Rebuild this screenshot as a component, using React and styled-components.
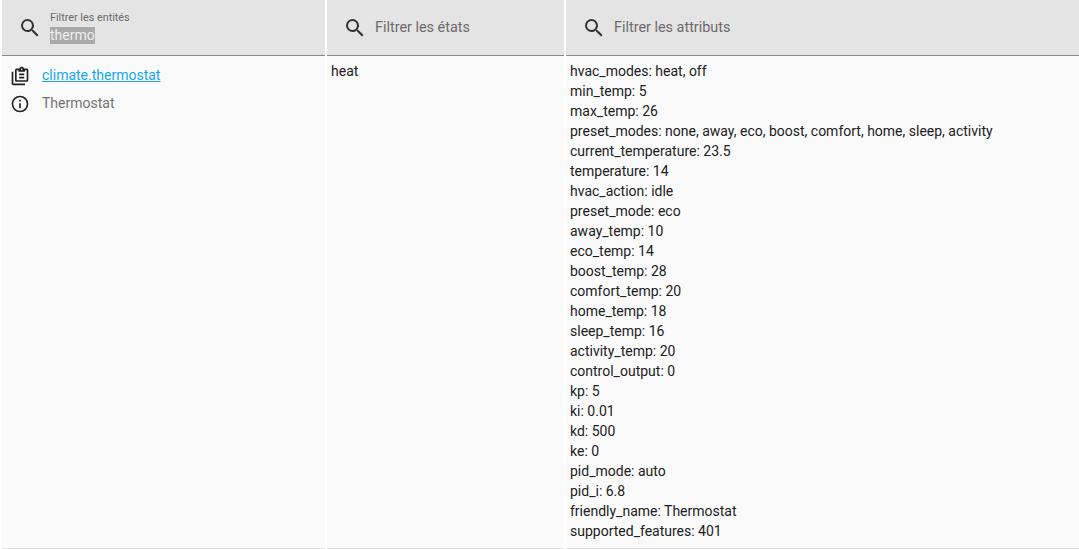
import React from "react";
import styled, { createGlobalStyle } from "styled-components";

const GlobalStyle = createGlobalStyle`
  html, body {
    margin: 0;
    padding: 0;
    background: #fff;
    overflow: hidden;
  }
  body {
    font-family: Roboto, "Liberation Sans", sans-serif;
    font-size: 14px;
    color: #212121;
  }
`;

const Table = styled.div`
  width: 1079px;
  height: 549px;
  display: grid;
  grid-template-columns: 325px 239px 515px;
  grid-template-rows: 56px 1fr;
`;

const FilterCell = styled.div`
  display: flex;
  align-items: center;
  background: #e4e4e4;
  border-bottom: 1px solid #8a8a8a;
  margin-left: 2px;
  padding-left: 16px;
  box-sizing: border-box;
  height: 56px;
`;

const SearchIcon = styled.svg`
  width: 24px;
  height: 24px;
  fill: #333;
  flex: none;
`;

const FilterLabel = styled.span`
  margin-left: 8px;
  margin-top: -1px;
  font-size: 14.4px;
  color: #6b6b6b;
`;

const FloatField = styled.div`
  margin-left: 8px;
  display: flex;
  flex-direction: column;
  align-items: flex-start;
`;

const SmallLabel = styled.span`
  font-size: 10.8px;
  line-height: 12px;
  color: #6b6b6b;
`;

const Selected = styled.span`
  font-size: 14px;
  line-height: 17px;
  margin-top: 3px;
  background: #a9a9a9;
  color: #f0f0f0;
`;

const BodyCell = styled.div`
  background: #fafafa;
  border-bottom: 1px solid #e0e0e0;
  margin-left: 2px;
  height: 493px;
  box-sizing: border-box;
  padding: 5px 0 0 ${(props) => props.$pad}px;
  line-height: 20px;
`;

const EntityRow = styled.div`
  display: flex;
  align-items: center;
  height: 28px;
  color: ${(props) => props.$color || "inherit"};
`;

const RowIcon = styled.svg`
  width: 20px;
  height: 20px;
  margin-top: 2px;
  margin-right: 12px;
  fill: #212121;
  flex: none;
`;

const EntityLink = styled.a`
  color: #12a8ea;
  text-decoration: underline;
`;

const search =
  "M9.5,3A6.5,6.5 0 0,1 16,9.5C16,11.11 15.41,12.59 14.44,13.73L14.71,14H15.5L20.5,19L19,20.5L14,15.5V14.71L13.73,14.44C12.59,15.41 11.11,16 9.5,16A6.5,6.5 0 0,1 3,9.5A6.5,6.5 0 0,1 9.5,3M9.5,5C7,5 5,7 5,9.5C5,12 7,14 9.5,14C12,14 14,12 14,9.5C14,7 12,5 9.5,5Z";
const clipboard =
  "M4 7V21H18V23H4C2.9 23 2 22.1 2 21V7H4M20 3C21.1 3 22 3.9 22 5V17C22 18.1 21.1 19 20 19H8C6.9 19 6 18.1 6 17V5C6 3.9 6.9 3 8 3H11.18C11.6 1.84 12.7 1 14 1C15.3 1 16.4 1.84 16.82 3H20M14 3C13.45 3 13 3.45 13 4C13 4.55 13.45 5 14 5C14.55 5 15 4.55 15 4C15 3.45 14.55 3 14 3M10 7V5H8V17H20V5H18V7H10M17 15H11V13H17V15M17 11H11V9H17V11Z";
const info =
  "M11,9H13V7H11M12,20C7.59,20 4,16.41 4,12C4,7.59 7.59,4 12,4C16.41,4 20,7.59 20,12C20,16.41 16.41,20 12,20M12,2A10,10 0 0,0 2,12A10,10 0 0,0 12,22A10,10 0 0,0 22,12A10,10 0 0,0 12,2M11,17H13V11H11V17Z";

const attributes = [
  "hvac_modes: heat, off",
  "min_temp: 5",
  "max_temp: 26",
  "preset_modes: none, away, eco, boost, comfort, home, sleep, activity",
  "current_temperature: 23.5",
  "temperature: 14",
  "hvac_action: idle",
  "preset_mode: eco",
  "away_temp: 10",
  "eco_temp: 14",
  "boost_temp: 28",
  "comfort_temp: 20",
  "home_temp: 18",
  "sleep_temp: 16",
  "activity_temp: 20",
  "control_output: 0",
  "kp: 5",
  "ki: 0.01",
  "kd: 500",
  "ke: 0",
  "pid_mode: auto",
  "pid_i: 6.8",
  "friendly_name: Thermostat",
  "supported_features: 401",
];

export default function App() {
  return (
    <>
      <GlobalStyle />
      <Table>
        <FilterCell>
          <SearchIcon viewBox="0 0 24 24"><path d={search} /></SearchIcon>
          <FloatField>
            <SmallLabel>Filtrer les entités</SmallLabel>
            <Selected>thermo</Selected>
          </FloatField>
        </FilterCell>
        <FilterCell>
          <SearchIcon viewBox="0 0 24 24"><path d={search} /></SearchIcon>
          <FilterLabel>Filtrer les états</FilterLabel>
        </FilterCell>
        <FilterCell>
          <SearchIcon viewBox="0 0 24 24"><path d={search} /></SearchIcon>
          <FilterLabel>Filtrer les attributs</FilterLabel>
        </FilterCell>
        <BodyCell $pad={8}>
          <EntityRow>
            <RowIcon viewBox="0 0 24 24"><path d={clipboard} /></RowIcon>
            <EntityLink href="#">climate.thermostat</EntityLink>
          </EntityRow>
          <EntityRow $color="#727272">
            <RowIcon viewBox="0 0 24 24"><path d={info} /></RowIcon>
            Thermostat
          </EntityRow>
        </BodyCell>
        <BodyCell $pad={4}>heat</BodyCell>
        <BodyCell $pad={4}>
          {attributes.map((line) => (
            <div key={line}>{line}</div>
          ))}
        </BodyCell>
      </Table>
    </>
  );
}
